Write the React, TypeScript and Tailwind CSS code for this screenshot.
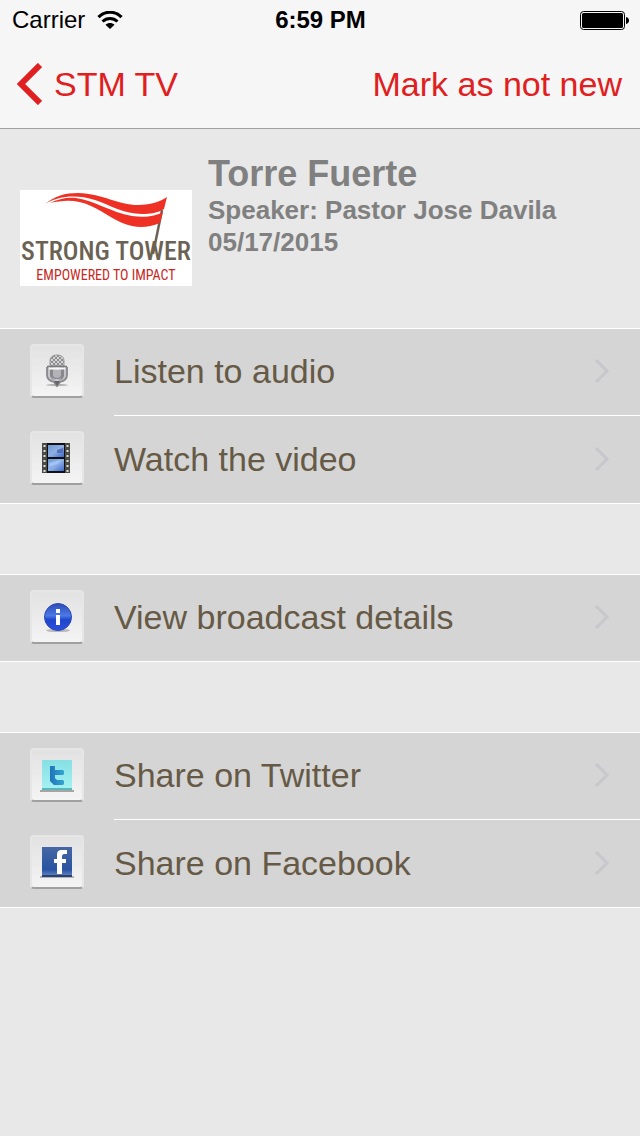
import type { ReactNode } from "react";

// Raised square plate behind every row icon
function Plate({ children }: { children: ReactNode }) {
  return (
    <span className="flex h-[54px] w-[54px] shrink-0 items-center justify-center rounded-sm border-2 border-[#e6e6e6] border-b-[#a0a0a0] bg-linear-to-b from-[#e2e2e2] to-[#f4f4f4]">
      <svg viewBox="0 0 36 36" className="h-9 w-9" aria-hidden="true">
        {children}
      </svg>
    </span>
  );
}

function MicIcon() {
  return (
    <Plate>
      <defs>
        <linearGradient id="mic" x1="0" x2="1" y1="0" y2="0">
          <stop offset="0" stopColor="#8a8a8e" />
          <stop offset="0.5" stopColor="#d0d0d4" />
          <stop offset="1" stopColor="#77777b" />
        </linearGradient>
        <pattern id="mesh" width="4" height="4" patternUnits="userSpaceOnUse">
          <rect width="2" height="2" fill="#8d8d90" />
          <rect x="2" y="2" width="2" height="2" fill="#8d8d90" />
        </pattern>
      </defs>
      <ellipse cx="18" cy="32" rx="11" ry="1.2" fill="#b4b4b4" />
      <path d="M8 14v8c0 4 3 6 7 7l3 4 3-4c4-1 7-3 7-7v-8" fill="#c5c5c9" stroke="#88888c" strokeWidth="1.8" />
      <rect x="11" y="2" width="14" height="26" rx="6" fill="url(#mic)" />
      <path d="M11 13V8c0-4 3-6 7-6s7 2 7 6v5z" fill="#d4d4d6" />
      <path d="M11 13V8c0-4 3-6 7-6s7 2 7 6v5z" fill="url(#mesh)" stroke="#98989c" />
      <path d="M8 13.5h20" stroke="#7c7c80" strokeWidth="1.6" />
      <path d="M10 15.5h16" stroke="#f7f7f7" strokeWidth="2" />
      <path d="M11 17h14v4c0 3-4 5-7 5s-7-2-7-5z" fill="#88888c" />
      <path d="M14 17h8v5c0 2-2 3-4 3s-4-1-4-3z" fill="#b4b4b8" />
      <path d="M15 28h6l-3 5z" fill="#66666e" />
    </Plate>
  );
}

function FilmIcon() {
  return (
    <Plate>
      <defs>
        <linearGradient id="film" x1="0" x2="1" y1="0" y2="1">
          <stop offset="0" stopColor="#6f9ad0" />
          <stop offset="0.5" stopColor="#8fb0e4" />
          <stop offset="1" stopColor="#4068cc" />
        </linearGradient>
      </defs>
      <rect x="3" y="3" width="28" height="30" fill="#4a4a46" />
      <rect x="8" y="3" width="18" height="30" fill="#111" />
      <rect x="9" y="5" width="16" height="12" fill="url(#film)" />
      <rect x="9" y="19" width="16" height="12" fill="url(#film)" />
      <path d="M18 10l6-2v5h-6z" fill="#5672b4" />
      <path d="M10 23l7-2 6-1-5 4-8 3z" fill="#a9c8ff" opacity="0.8" />
      <path d="M5.5 5v27M28.5 5v27" stroke="#dededa" strokeWidth="2" strokeDasharray="2 3" />
    </Plate>
  );
}

function InfoIcon() {
  return (
    <Plate>
      <defs>
        <linearGradient id="info" x1="0" x2="0" y1="0" y2="1">
          <stop offset="0" stopColor="#2d49b4" />
          <stop offset="0.45" stopColor="#4b7ae6" />
          <stop offset="0.6" stopColor="#2046cc" />
          <stop offset="1" stopColor="#2c50dc" />
        </linearGradient>
      </defs>
      <ellipse cx="19" cy="31.5" rx="12" ry="1.6" fill="#b9b9bd" />
      <circle cx="19" cy="18" r="13.5" fill="url(#info)" stroke="#2a47b6" />
      <rect x="17" y="10" width="4" height="4" fill="#fff" />
      <path d="M17 16h4v10h-4z" fill="#fff" />
    </Plate>
  );
}

function TwitterIcon() {
  return (
    <Plate>
      <defs>
        <linearGradient id="tile" x1="0" x2="0" y1="0" y2="1">
          <stop offset="0" stopColor="#86dfe4" />
          <stop offset="1" stopColor="#a6f2f2" />
        </linearGradient>
        <linearGradient id="bird" x1="0" x2="1" y1="0" y2="0">
          <stop offset="0" stopColor="#1f74b8" />
          <stop offset="1" stopColor="#36a5d2" />
        </linearGradient>
      </defs>
      <path d="M1 34h34" stroke="#a5a5a5" strokeWidth="2" />
      <rect x="3" y="3" width="30" height="30" rx="1" fill="url(#tile)" />
      <path d="M3 32h30" stroke="#58b8bc" strokeWidth="2" />
      <path d="M11 9h5v4h8l1 1v3l-1 1h-8v3l2 2h6l1 1v3l-1 1h-9l-4-4z" fill="url(#bird)" />
    </Plate>
  );
}

function FacebookIcon() {
  return (
    <Plate>
      <defs>
        <linearGradient id="fb" x1="0" x2="0" y1="0" y2="1">
          <stop offset="0" stopColor="#4767a4" />
          <stop offset="0.75" stopColor="#2853a0" />
          <stop offset="1" stopColor="#6d8dc8" />
        </linearGradient>
      </defs>
      <path d="M1 33h34" stroke="#b5b5b5" strokeWidth="2" />
      <rect x="3" y="3" width="30" height="30" fill="url(#fb)" />
      <path d="M3 32h30" stroke="#2b3f70" strokeWidth="2" />
      <path d="M28 6v4h-3c-1 0-2 1-2 2v3h4v4h-4v11h-5V19h-3v-4h3v-4c0-4 2-5 5-5z" fill="#fff" />
    </Plate>
  );
}

function ChurchLogo() {
  return (
    <svg viewBox="0 0 172 96" className="h-24 w-43 shrink-0 bg-white" role="img" aria-label="Strong Tower, Empowered to Impact">
      <path d="M142 20l-9 44" stroke="#6b6253" strokeWidth="2.5" />
      <path d="M25 14C35 6 45 3 58 3c26 1 40 12 60 12 14 0 23-4 29-8l-3 12c-6 4-14 5-22 5-18 0-32-9-47-14C56 4 38 6 25 14z" fill="#ee3124" />
      <path d="M30 13c8-4 17-6 26-5 20 3 34 14 56 18 13 2 24 0 31-4l-3 11c-10 4-19 5-28 3-15-3-27-14-41-20-14-7-28-6-41-3z" fill="#ee3124" />
      <text x="86" y="70" textAnchor="middle" fontSize="26" fill="#6b6253" fontWeight="500" fontFamily="'Roboto Condensed', Lato, sans-serif">
        STRONG TOWER
      </text>
      <text x="86" y="90" textAnchor="middle" fontSize="14" fill="#c8281e" fontFamily="'Roboto Condensed', Lato, sans-serif">
        EMPOWERED TO IMPACT
      </text>
    </svg>
  );
}

const sections = [
  [
    { label: "Listen to audio", icon: <MicIcon /> },
    { label: "Watch the video", icon: <FilmIcon /> },
  ],
  [{ label: "View broadcast details", icon: <InfoIcon /> }],
  [
    { label: "Share on Twitter", icon: <TwitterIcon /> },
    { label: "Share on Facebook", icon: <FacebookIcon /> },
  ],
];

function Row({ label, icon, divided }: { label: string; icon: ReactNode; divided: boolean }) {
  return (
    <li className="flex h-[88px] border-white first:border-t last:border-b">
      <button className="flex flex-1 items-stretch pl-[30px] text-left">
        <span className="flex items-center pb-[3px]">{icon}</span>
        <span
          className={
            "ml-[30px] flex flex-1 items-center justify-between border-white pr-[30px] pb-0.5 " +
            (divided ? "border-b" : "")
          }
        >
          <span className="text-[34px] leading-10 text-[#665a46]">{label}</span>
          <svg viewBox="0 0 16 26" className="h-[26px] w-4" fill="none" stroke="#c7c7cc" strokeWidth="3" aria-hidden="true">
            <path d="M2 2l11 11L2 24" />
          </svg>
        </span>
      </button>
    </li>
  );
}

export default function App() {
  return (
    <div className="min-h-screen bg-[#e8e8e8] font-['Liberation_Sans',Arial,sans-serif]">
      <header className="border-b border-[#a0a0a0] bg-[#f6f6f6]">
        <div className="grid h-10 grid-cols-3 items-center pr-[11px] pl-3 text-2xl leading-10 text-black">
          <div className="flex items-center gap-3">
            <span>Carrier</span>
            <svg viewBox="0 0 26 18" className="h-[18px] w-[26px]" fill="none" stroke="#000" aria-label="Wi-Fi" role="img">
              <path d="M1.5 6.2C8-.4 18-.4 24.5 6.2" strokeWidth="3.2" />
              <path d="M5.5 10.5c4.4-4 10.6-4 15 0" strokeWidth="3" />
              <path d="M13 18l-4.500-4.300c2.500-2.200 6.500-2.200 9 0z" fill="#000" stroke="none" />
            </svg>
          </div>
          <span className="text-center font-bold">6:59 PM</span>
          <svg viewBox="0 0 49 19" className="h-[19px] w-[49px] justify-self-end" role="img" aria-label="Battery full">
            <rect x="0.5" y="0.5" width="44" height="18" rx="3" fill="none" stroke="#000" />
            <rect x="2" y="2" width="41" height="15" rx="1.5" />
            <path d="M46 6c2 .5 3 1.5 3 3.5S48 12.5 46 13z" />
          </svg>
        </div>
        <nav className="flex h-[88px] items-center justify-between pr-[18px] pl-4 text-[34px] leading-10 text-[#e02020]">
          <a href="#" className="flex items-center gap-3">
            <svg viewBox="0 0 26 42" className="h-[42px] w-[26px]" fill="none" stroke="currentColor" strokeWidth="6" aria-hidden="true">
              <path d="M24 2L5 21l19 19" />
            </svg>
            <span>STM TV</span>
          </a>
          <button>Mark as not new</button>
        </nav>
      </header>

      <main>
        <div className="flex h-[199px] gap-4 px-5 text-[#808080]">
          <div className="pt-[61px]">
            <ChurchLogo />
          </div>
          <div className="pt-[25px] font-bold">
            <h1 className="text-4xl leading-10">Torre Fuerte</h1>
            <p className="text-[26px] leading-8">Speaker: Pastor Jose Davila</p>
            <p className="text-[26px] leading-8">05/17/2015</p>
          </div>
        </div>

        <div className="flex flex-col gap-[70px]">
          {sections.map((rows, i) => (
            <ul key={i} className="bg-[#d5d5d5]">
              {rows.map((row, j) => (
                <Row key={row.label} label={row.label} icon={row.icon} divided={j < rows.length - 1} />
              ))}
            </ul>
          ))}
        </div>
      </main>
    </div>
  );
}
